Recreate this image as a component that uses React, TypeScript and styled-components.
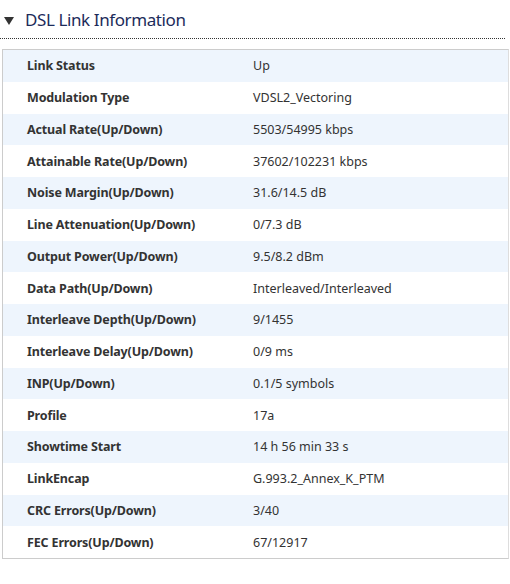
import React from "react";
import styled, { createGlobalStyle } from "styled-components";

const Global = createGlobalStyle`
  html, body { margin: 0; padding: 0; background: #fff; }
  body { font-family: "Noto Sans", "Open Sans", sans-serif; }
`;

const Page = styled.div`
  width: 510px;
  padding-top: 5px;
`;

const Header = styled.div`
  display: flex;
  align-items: center;
  box-sizing: border-box;
  height: 34px;
  padding: 0 0 4px 4px;
  border-bottom: 1px dotted #333;
  margin-right: 5px;
`;

const Arrow = styled.span`
  width: 0;
  height: 0;
  border-left: 5.5px solid transparent;
  border-right: 5.5px solid transparent;
  border-top: 8px solid #333;
  margin-right: 11px;
  margin-top: 2px;
`;

const Title = styled.h2`
  margin: 0;
  font-size: 17px;
  letter-spacing: -0.4px;
  font-weight: normal;
  color: #1c2b5a;
`;

const Table = styled.div`
  margin: 10px 1px 0 2px;
  border: 1px solid #ccc;
  border-right-color: #ddd;
`;

const Row = styled.div<{ $alt: boolean }>`
  display: grid;
  grid-template-columns: 226px 1fr;
  height: 31.75px;
  align-items: center;
  padding-left: 24px;
  background: ${(p) => (p.$alt ? "#eef5fd" : "#fff")};
  font-size: 12.5px;
  color: #333;
`;

const Label = styled.span`
  font-weight: bold;
  letter-spacing: -0.15px;
`;

const Value = styled.span``;

const rows: [string, string][] = [
  ["Link Status", "Up"],
  ["Modulation Type", "VDSL2_Vectoring"],
  ["Actual Rate(Up/Down)", "5503/54995 kbps"],
  ["Attainable Rate(Up/Down)", "37602/102231 kbps"],
  ["Noise Margin(Up/Down)", "31.6/14.5 dB"],
  ["Line Attenuation(Up/Down)", "0/7.3 dB"],
  ["Output Power(Up/Down)", "9.5/8.2 dBm"],
  ["Data Path(Up/Down)", "Interleaved/Interleaved"],
  ["Interleave Depth(Up/Down)", "9/1455"],
  ["Interleave Delay(Up/Down)", "0/9 ms"],
  ["INP(Up/Down)", "0.1/5 symbols"],
  ["Profile", "17a"],
  ["Showtime Start", "14 h 56 min 33 s"],
  ["LinkEncap", "G.993.2_Annex_K_PTM"],
  ["CRC Errors(Up/Down)", "3/40"],
  ["FEC Errors(Up/Down)", "67/12917"],
];

export default function App() {
  return (
    <Page>
      <Global />
      <Header>
        <Arrow />
        <Title>DSL Link Information</Title>
      </Header>
      <Table>
        {rows.map(([l, v], i) => (
          <Row key={l} $alt={i % 2 === 0}>
            <Label>{l}</Label>
            <Value>{v}</Value>
          </Row>
        ))}
      </Table>
    </Page>
  );
}
